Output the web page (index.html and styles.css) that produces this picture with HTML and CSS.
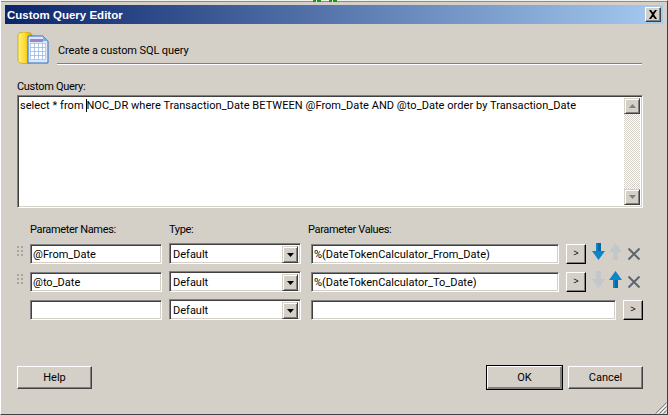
FILE: index.html
```html
<!DOCTYPE html>
<html lang="en">
<head>
<meta charset="utf-8">
<title>Custom Query Editor</title>
<link rel="stylesheet" href="styles.css">
</head>
<body>
<div class="window">
  <span class="tick tick-a"></span>
  <span class="tick tick-b"></span>
  <div class="titlebar">
    <span class="title">Custom Query Editor</span>
    <span class="close"><svg width="10" height="9" viewBox="0 0 10 9"><path d="M1 0h2l2 2.500 2-2.500h2L6 4.500 9 9H7L5 6.500 3 9H1l3-4.500z" fill="#000"/></svg></span>
  </div>
  <div class="content">
    <div class="header">
      <svg class="logo" width="32" height="32" viewBox="0 0 32 32">
        <defs>
          <linearGradient id="cyl" x1="0" x2="1" y1="0" y2="0"><stop offset="0" stop-color="#fff27a"/><stop offset=".5" stop-color="#ffd92e"/><stop offset="1" stop-color="#d9a400"/></linearGradient>
        </defs>
        <path d="M1 3c0-2 3-3 6.500-3S15 1 15 3v26c0 2-3 2.500-6.500 2.500S1 31 1 29z" fill="url(#cyl)" stroke="#b89a20" stroke-width=".7"/>
        <path d="M11 4h15l5 5v22H11z" fill="#dbe8fb" stroke="#2d6fc0"/>
        <path d="M26 4v5h5z" fill="#6fb4ee"/>
        <rect x="13" y="7" width="13" height="3" fill="#a77fc8"/>
        <g fill="#fff" stroke="#8fb4e4" stroke-width=".6">
          <rect x="13.500" y="11.500" width="4" height="4"/><rect x="17.500" y="11.500" width="4" height="4"/><rect x="21.500" y="11.500" width="4" height="4"/><rect x="25.500" y="11.500" width="3" height="4"/>
          <rect x="13.500" y="15.500" width="4" height="4"/><rect x="17.500" y="15.500" width="4" height="4"/><rect x="21.500" y="15.500" width="4" height="4"/><rect x="25.500" y="15.500" width="3" height="4"/>
          <rect x="13.500" y="19.500" width="4" height="4"/><rect x="17.500" y="19.500" width="4" height="4"/><rect x="21.500" y="19.500" width="4" height="4"/><rect x="25.500" y="19.500" width="3" height="4"/>
          <rect x="13.500" y="23.500" width="4" height="4"/><rect x="17.500" y="23.500" width="4" height="4"/><rect x="21.500" y="23.500" width="4" height="4"/><rect x="25.500" y="23.500" width="3" height="4"/>
        </g>
      </svg>
      <div class="caption">Create a custom SQL query</div>
    </div>
    <div class="query-label">Custom Query:</div>
    <div class="query sunken">
      <div class="query-text">select * from <span class="caret"></span>NOC_DR where Transaction_Date BETWEEN @From_Date AND @to_Date order by Transaction_Date</div>
      <div class="scrollbar">
        <span class="btn raised sb"><svg width="7" height="4" viewBox="0 0 7 4"><path d="M3.500 0L7 4H0z" fill="#808080"/></svg></span>
        <span class="track"></span>
        <span class="btn raised sb"><svg width="7" height="4" viewBox="0 0 7 4"><path d="M0 0h7L3.500 4z" fill="#808080"/></svg></span>
      </div>
    </div>
    <div class="row labels">
      <span class="grip"></span>
      <span class="name">Parameter Names:</span>
      <span class="type">Type:</span>
      <span class="value">Parameter Values:</span>
    </div>
    <div class="row">
      <span class="grip"><i></i></span>
      <div class="field name sunken">@From_Date</div>
      <div class="field type sunken">Default<span class="btn raised drop"><svg width="7" height="4" viewBox="0 0 7 4"><path d="M0 0h7L3.500 4z" fill="#000"/></svg></span></div>
      <div class="field value sunken">%(DateTokenCalculator_From_Date)</div>
      <span class="btn raised more">&gt;</span>
      <svg class="icon" width="13" height="17" viewBox="0 0 13 17"><path d="M4 0h5v8h4l-6.500 9L0 8h4z" fill="#0b84c8"/><path d="M6 0h3v8H6z" fill="#046aa6"/></svg>
      <svg class="icon" width="13" height="17" viewBox="0 0 13 17"><path d="M4 17h5V9h4L6.500 0 0 9h4z" fill="#c2c7c9"/></svg>
      <svg class="icon close-icon" width="12" height="12" viewBox="0 0 12 12"><path d="M.5.500l11 11M11.500.500l-11 11" stroke="#5e6570" stroke-width="2" fill="none"/></svg>
    </div>
    <div class="row">
      <span class="grip"><i></i></span>
      <div class="field name sunken">@to_Date</div>
      <div class="field type sunken">Default<span class="btn raised drop"><svg width="7" height="4" viewBox="0 0 7 4"><path d="M0 0h7L3.500 4z" fill="#000"/></svg></span></div>
      <div class="field value sunken">%(DateTokenCalculator_To_Date)</div>
      <span class="btn raised more">&gt;</span>
      <svg class="icon" width="13" height="17" viewBox="0 0 13 17"><path d="M4 0h5v8h4l-6.500 9L0 8h4z" fill="#c2c7c9"/></svg>
      <svg class="icon" width="13" height="17" viewBox="0 0 13 17"><path d="M4 17h5V9h4L6.500 0 0 9h4z" fill="#0b84c8"/><path d="M6 9h3v8H6z" fill="#046aa6"/></svg>
      <svg class="icon close-icon" width="12" height="12" viewBox="0 0 12 12"><path d="M.5.500l11 11M11.500.500l-11 11" stroke="#5e6570" stroke-width="2" fill="none"/></svg>
    </div>
    <div class="row">
      <span class="grip"></span>
      <div class="field name sunken"></div>
      <div class="field type sunken">Default<span class="btn raised drop"><svg width="7" height="4" viewBox="0 0 7 4"><path d="M0 0h7L3.500 4z" fill="#000"/></svg></span></div>
      <div class="field value wide sunken"></div>
      <span class="btn raised more">&gt;</span>
    </div>
    <div class="footer">
      <span class="btn action">Help</span>
      <span class="spacer"></span>
      <span class="btn action default">OK</span>
      <span class="btn action">Cancel</span>
    </div>
  </div>
  <svg class="resize" width="13" height="13" viewBox="0 0 13 13"><path d="M12.500 1.500l-11 11M12.500 5.500l-7 7M12.500 9.500l-3 3" stroke="#808080" fill="none"/><path d="M12.500 3.500l-9 9M12.500 7.500l-5 5M12.500 11.500l-1 1" stroke="#fff" fill="none"/></svg>
</div>
</body>
</html>
```
FILE: styles.css
```css
* { box-sizing: border-box; }
html, body { margin: 0; padding: 0; }
body {
  width: 668px;
  height: 415px;
  overflow: hidden;
  background: #d4d0c8;
  font-family: Roboto, "Liberation Sans", sans-serif;
  font-size: 11px;
  color: #000;
}
.window {
  position: relative;
  width: 668px;
  height: 415px;
  padding: 4px 4px 3px 3px;
  background: #d4d0c8;
  border: 1px solid;
  border-color: #f2f0ec #404040 #404040 #fff;
  box-shadow: inset 0 1px 0 #8c8c8c;
}
.tick {
  position: absolute;
  top: -1px;
  width: 8px;
  height: 2px;
  background: linear-gradient(90deg, #129a12 0 3px, #e4e2dc 3px 4px, #129a12 4px);
}
.tick-a { left: 312px; }
.tick-b { left: 328px; }
.titlebar {
  display: flex;
  align-items: center;
  justify-content: space-between;
  height: 19px;
  margin-left: 1px;
  padding: 0 2px;
  background: linear-gradient(90deg, #0a246a, #a6caf0);
}
.title { color: #fff; font-weight: bold; font-size: 11.500px; font-family: "Liberation Sans", sans-serif; }
.close {
  display: flex;
  align-items: center;
  justify-content: center;
  width: 16px;
  height: 15px;
  background: #d4d0c8;
  border: 1px solid;
  border-color: #fff #404040 #404040 #fff;
  box-shadow: inset -1px -1px 0 #808080;
}
.content { padding: 0 0 0 13px; }
.header {
  display: flex;
  height: 40px;
  width: 625px;
  padding-top: 8px;
}
.logo { flex: none; }
.caption {
  flex: 1;
  height: 32px;
  margin-left: 8px;
  padding: 12px 0 0 1px;
  letter-spacing: -.1px;
  border-bottom: 1px solid #808080;
  box-shadow: 0 1px 0 #fff;
}
.query-label { margin-top: 16px; height: 13px; line-height: 13px; letter-spacing: -.3px; }
.sunken {
  border: 1px solid;
  border-color: #808080 #fff #fff #808080;
  box-shadow: inset 1px 1px 0 #404040, inset -1px -1px 0 #d4d0c8;
  background: #fff;
}
.query {
  position: relative;
  display: flex;
  width: 626px;
  height: 113px;
  margin-top: 2px;
  padding: 2px;
}
.query-text { flex: 1; padding: 1px 0 0 0; white-space: nowrap; line-height: 13px; letter-spacing: .05px; position: relative; }
.caret {
  display: inline-block;
  width: 1px;
  height: 13px;
  margin-right: -1px;
  background: #000;
  vertical-align: top;
}
.scrollbar { display: flex; flex-direction: column; width: 16px; }
.track {
  flex: 1;
  background: repeating-conic-gradient(#fff 0 25%, #d4d0c8 0 50%) 0 0 / 2px 2px;
}
.btn {
  display: flex;
  align-items: center;
  justify-content: center;
  background: #d4d0c8;
}
.raised {
  border: 1px solid;
  border-color: #fff #000 #000 #fff;
  box-shadow: inset -1px -1px 0 #808080;
}
.sb { width: 16px; height: 16px; border-color: #d4d0c8 #404040 #404040 #d4d0c8; box-shadow: inset 1px 1px 0 #fff, inset -1px -1px 0 #808080; flex: none; }
.row {
  display: flex;
  align-items: center;
  height: 21px;
  margin-top: 7px;
}
.labels { height: 13px; margin-top: 15px; margin-bottom: 0; letter-spacing: -.35px; }
.labels .value { margin-left: -3px; }
.grip { width: 13px; flex: none; display: flex; }
.grip i {
  display: block;
  width: 6px;
  height: 10px;
  margin-top: -6px;
  background: repeating-linear-gradient(90deg, #a8a59e 0 2px, transparent 2px 4px) ,
              #d4d0c8;
  -webkit-mask: repeating-linear-gradient(180deg, #000 0 2px, transparent 2px 4px);
  mask: repeating-linear-gradient(180deg, #000 0 2px, transparent 2px 4px);
}
.name { width: 132px; flex: none; margin-right: 7px; }
.type { width: 132px; flex: none; margin-right: 10px; }
.value { width: 248px; flex: none; margin-right: 7px; }
.value.wide { width: 305px; }
.field {
  height: 20px;
  margin-top: 1px;
  padding: 3px 0 0 2px;
  line-height: 13px;
  white-space: nowrap;
}
.type.field { position: relative; height: 21px; margin-top: 0; padding-top: 4px; padding-left: 3px; }
.drop {
  position: absolute;
  right: 2px;
  top: 2px;
  width: 16px;
  height: 17px;
  border-color: #d4d0c8 #404040 #404040 #d4d0c8;
  box-shadow: inset 1px 1px 0 #fff, inset -1px -1px 0 #808080;
}
.more { width: 20px; height: 20px; flex: none; font-family: "Liberation Mono", monospace; font-size: 9px; margin-right: 6px; }
.icon { flex: none; margin-right: 4px; margin-top: -4px; }
.close-icon { margin-right: 0; margin-left: 2px; margin-top: 0; }
.footer {
  display: flex;
  width: 626px;
  margin-top: 46px;
  gap: 6px;
}
.spacer { flex: 1; }
.action {
  width: 75px;
  height: 23px;
  border: 1px solid;
  border-color: #fff #404040 #404040 #fff;
  box-shadow: inset -1px -1px 0 #808080;
}
.default {
  outline: 1px solid #000;
  outline-offset: 0;
  border-color: #fff #808080 #808080 #fff;
}
.resize { position: absolute; right: 0; bottom: 0; }
```
